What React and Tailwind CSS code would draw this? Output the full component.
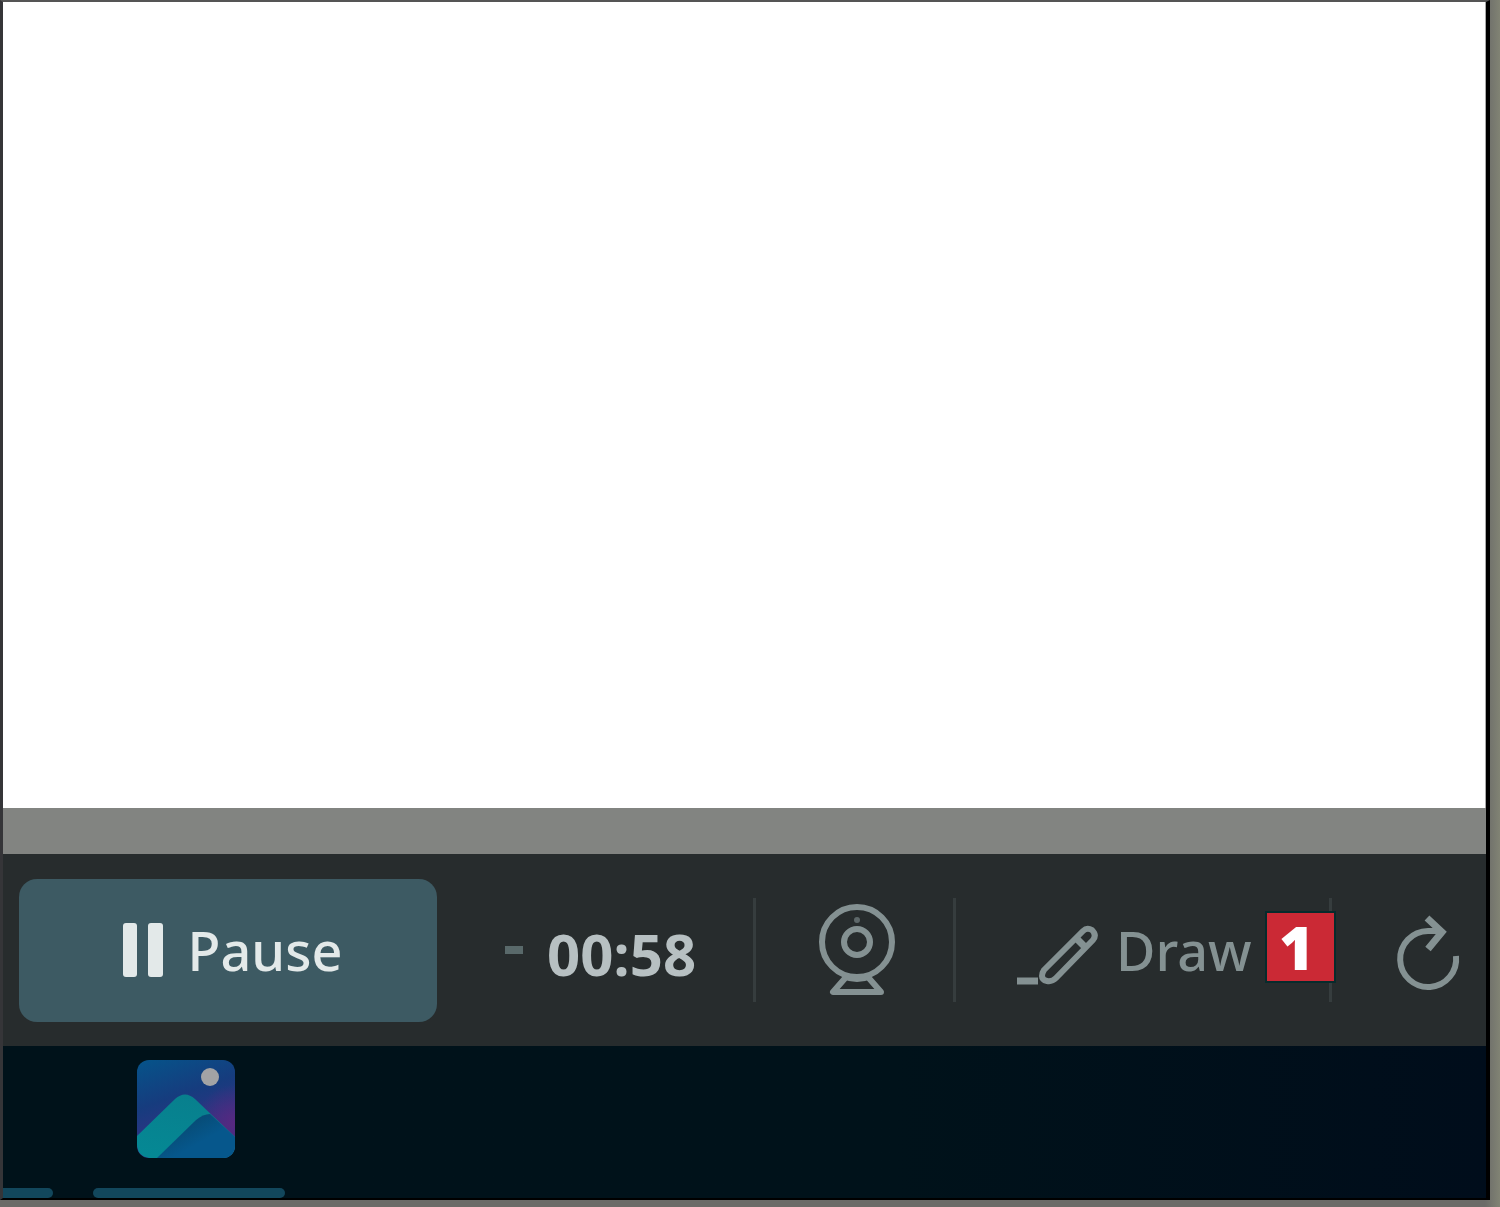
function PauseIcon() {
  return (
    <svg viewBox="0 0 42 54" className="h-[54px] w-[42px] shrink-0" fill="currentColor" aria-hidden="true">
      <rect x="1" y="0" width="14" height="54" rx="3" />
      <rect x="26" y="0" width="15" height="54" rx="3" />
    </svg>
  );
}

function WebcamIcon() {
  return (
    <svg viewBox="0 0 80 92" className="h-[92px] w-20 shrink-0" fill="none" stroke="currentColor" aria-hidden="true">
      <circle cx="40" cy="38" r="35" strokeWidth="6" />
      <circle cx="40" cy="38" r="13" strokeWidth="6" />
      <circle cx="40" cy="16" r="3" fill="currentColor" stroke="none" opacity="0.6" />
      <path d="M30 72 L16 88 H64 L50 72" strokeWidth="6" strokeLinejoin="round" />
      <path d="M26 72 Q40 78 54 72" strokeWidth="6" />
    </svg>
  );
}

function PencilIcon() {
  return (
    <svg viewBox="0 0 84 64" className="h-16 w-[84px] shrink-0" fill="none" stroke="currentColor" aria-hidden="true">
      <path d="M1 57 H22" strokeWidth="7" />
      <path
        d="M28 46 L67 7 Q71 3 76 6 Q81 11 77 16 L40 54 Q36 58 31 57 Q26 56 26 52 Q26 49 28 46 Z"
        strokeWidth="6"
        strokeLinejoin="round"
      />
      <path d="M59 13 L70 24" strokeWidth="7" />
    </svg>
  );
}

function RestartIcon() {
  return (
    <svg viewBox="0 0 66 78" className="h-[78px] w-[66px] shrink-0" fill="none" stroke="currentColor" aria-hidden="true">
      <path d="M60 43 A28 28 0 1 1 32 18 H44" strokeWidth="6" />
      <path d="M31 5 L46 19 L32 36" strokeWidth="7" />
    </svg>
  );
}

function PhotosIcon() {
  return (
    <svg viewBox="0 0 98 98" className="h-[98px] w-[98px]" aria-hidden="true">
      <defs>
        <linearGradient id="sky" x1="0" y1="0" x2="0.35" y2="1">
          <stop offset="0" stopColor="#05548a" />
          <stop offset="0.45" stopColor="#163c7e" />
          <stop offset="0.8" stopColor="#303384" />
        </linearGradient>
        <radialGradient id="glow" cx="1" cy="0.65" r="0.4">
          <stop offset="0" stopColor="#582880" />
          <stop offset="1" stopColor="#582880" stopOpacity="0" />
        </radialGradient>
        <linearGradient id="slope" x1="0.6" y1="0" x2="0.3" y2="1">
          <stop offset="0" stopColor="#087f8d" />
          <stop offset="1" stopColor="#058894" />
        </linearGradient>
        <linearGradient id="shade" x1="0" y1="0" x2="1" y2="1">
          <stop offset="0.2" stopColor="#07486f" />
          <stop offset="0.6" stopColor="#06578c" />
        </linearGradient>
        <clipPath id="tile">
          <rect width="98" height="98" rx="12" />
        </clipPath>
      </defs>
      <g clipPath="url(#tile)">
        <rect width="98" height="98" fill="url(#sky)" />
        <rect width="98" height="98" fill="url(#glow)" />
        <path d="M0 76 L38 39 Q48 30 58 39 L98 77 V87 Q98 98 87 98 H12 Q0 96 0 84 Z" fill="url(#slope)" />
        <path d="M20 98 L59 60 Q66 54 73 54 L98 77 V98 Z" fill="url(#shade)" />
        <circle cx="73" cy="17" r="9" fill="#a3a3a5" />
      </g>
    </svg>
  );
}

function Divider() {
  return <span className="h-[104px] w-[3px] shrink-0 bg-[#363d3e]" />;
}

export default function App() {
  return (
    <div className="flex min-h-screen flex-col bg-linear-to-r from-[#6b6b68] from-99% to-[#818374] pr-[10px] pb-[7px] font-['Noto_Sans','Open_Sans',sans-serif]">
      <div className="flex grow flex-col border-t-2 border-r-4 border-b-2 border-l-3 border-t-[#555555] border-r-black border-b-black border-l-[#353538]">
        <main className="grow border-r border-[#aaaaaa] bg-white" />
        <div className="h-[46px] shrink-0 bg-[#828481]" />
        <div className="flex h-48 shrink-0 items-center overflow-hidden bg-[#272c2d] pl-4 text-[#849192]">
          <button
            type="button"
            className="flex h-[143px] w-[418px] shrink-0 items-center justify-center gap-6 rounded-[18px] bg-[#3d5a63] pl-2 text-[54px] leading-none font-medium text-[#e3e9e9]"
          >
            <PauseIcon />
            <span>Pause</span>
          </button>
          <div className="ml-[68px] flex w-[248px] shrink-0 items-center gap-6">
            <span className="h-2 w-[18px] bg-[#59696a]" />
            <time className="pt-2 font-['Open_Sans',sans-serif] text-[58px] leading-none font-bold text-[#b7c0c2]">00:58</time>
          </div>
          <Divider />
          <button type="button" aria-label="Webcam" className="flex w-[197px] shrink-0 justify-center pl-1">
            <WebcamIcon />
          </button>
          <Divider />
          <div className="relative flex w-[373px] shrink-0 items-center pl-[60px]">
            <button type="button" className="flex items-center gap-4 text-[54px] leading-none font-medium">
              <span className="pt-3">
                <PencilIcon />
              </span>
              <span>Draw</span>
            </button>
            <span className="absolute top-1/2 right-[-5px] z-10 flex h-[68px] w-[67px] -translate-y-[37px] items-center justify-center bg-[#cb2935] pr-2 font-['Open_Sans',sans-serif] text-[60px] leading-none font-extrabold text-white outline-2 outline-[#082b2c]">
              1
            </span>
          </div>
          <Divider />
          <button type="button" aria-label="Restart" className="ml-16 shrink-0 pt-1">
            <RestartIcon />
          </button>
        </div>
        <div className="flex h-[152px] shrink-0 items-stretch gap-10 bg-linear-to-r from-[#00121a] from-60% to-[#000d1b]">
          <div className="flex w-[50px] flex-col justify-end">
            <span className="h-[10px] rounded-r-md bg-[#12475c]" />
          </div>
          <button type="button" aria-label="Photos" className="flex w-48 flex-col justify-between pt-[14px]">
            <span className="pl-11">
              <PhotosIcon />
            </span>
            <span className="h-[10px] w-full rounded-md bg-[#12475c]" />
          </button>
        </div>
      </div>
    </div>
  );
}
